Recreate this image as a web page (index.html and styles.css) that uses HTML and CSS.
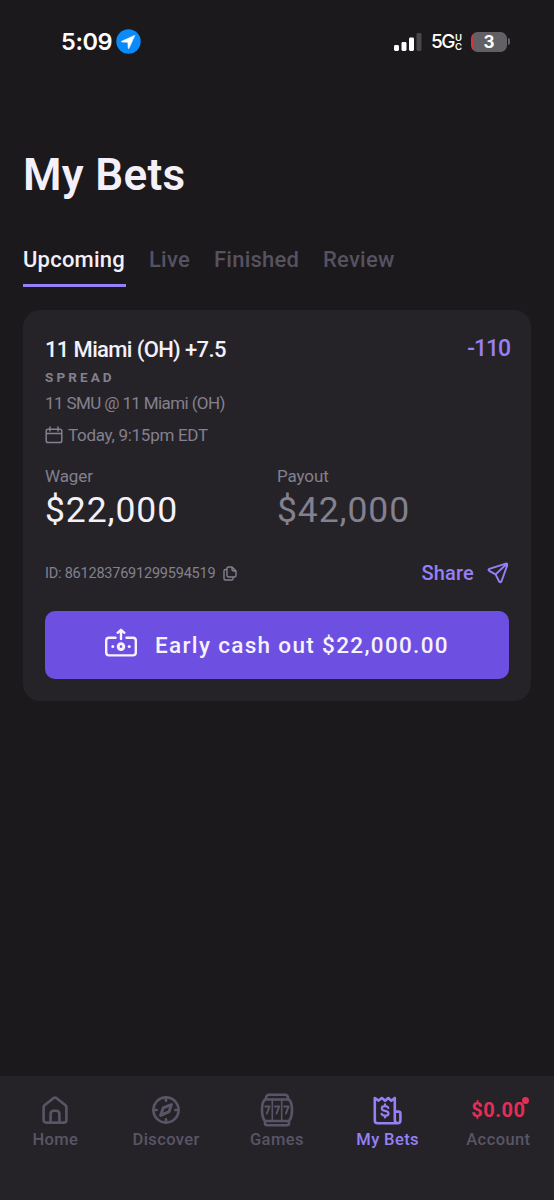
FILE: index.html
```html
<!DOCTYPE html>
<html lang="en">
<head>
<meta charset="utf-8">
<title>My Bets</title>
<link rel="stylesheet" href="styles.css">
</head>
<body>
<div class="app">
  <header class="status">
    <div class="clock"><span class="time">5:09</span>
      <svg class="loc" viewBox="0 0 25 25"><circle cx="12.5" cy="12.5" r="12.2" fill="#0a8bfb"/><path d="M18.6 6.5 5.7 12.2q-.8.6.2.8l6 .3.3 5.9q.3 1 .8.1z" fill="#fff" stroke="#fff" stroke-width=".6" stroke-linejoin="round"/></svg>
    </div>
    <div class="signals">
      <svg class="bars" viewBox="0 0 28 18"><rect x="0" y="12" width="5" height="6" rx="1.4" fill="#fff"/><rect x="7.5" y="9" width="5" height="9" rx="1.4" fill="#fff"/><rect x="15" y="4.500" width="5" height="13.500" rx="1.4" fill="#fff"/><rect x="22.5" y="0" width="5" height="18" rx="1.4" fill="#48474a"/></svg>
      <span class="net">5G</span><span class="uc"><span>U</span><span>C</span></span>
      <div class="battery"><span>3</span></div><i class="nub"></i>
    </div>
  </header>
  <main>
    <h1>My Bets</h1>
    <nav class="tabs"><a class="tab t-up active">Upcoming</a><a class="tab t-live">Live</a><a class="tab t-fin">Finished</a><a class="tab t-rev">Review</a></nav>
    <section class="card">
      <div class="head"><h2>11 Miami (OH) +7.5</h2><span class="odds">-110</span></div>
      <div class="kind">SPREAD</div>
      <div class="match">11 SMU @ 11 Miami (OH)</div>
      <div class="when"><svg viewBox="0 0 18 18" class="cal"><path d="M3 3.2h12q1.8 0 1.8 1.8v9.7q0 1.8-1.8 1.8H3q-1.8 0-1.8-1.8V5Q1.200 3.200 3 3.200zM1.200 7.600h15.600M5 .9v4.200M13 .9v4.200"/></svg><span>Today, 9:15pm EDT</span></div>
      <div class="amounts">
        <div><div class="label">Wager</div><div class="value">$22,000</div></div>
        <div><div class="label">Payout</div><div class="value dim">$42,000</div></div>
      </div>
      <div class="meta">
        <div class="id"><span>ID: 8612837691299594519</span><svg viewBox="0 0 14 15" class="copy"><path d="M9 1H5.400Q4 1 4 2.400v7.200Q4 11 5.400 11h6.200Q13 11 13 9.600V5zM9 1v2.600Q9 5 10.400 5H13M4 3.500H2.400Q1 3.500 1 5v7.500Q1 14 2.500 14h6.200q1.300 0 1.300-1.300V11"/></svg></div>
        <div class="share"><span>Share</span><svg viewBox="0 0 22 22" class="plane"><path d="M18.800 1.600 2.400 6.800Q.7 7.600 2.200 8.800L8.600 12.400 12.300 19.700Q13.600 21 14.500 19.300L20.200 3.400Q20.500 1.300 18.800 1.600zM8.600 12.400 19.600 2"/></svg></div>
      </div>
      <button class="cashout"><svg viewBox="0 0 32 30" class="cash"><path d="M10.500 9.800H4Q1.200 9.800 1.200 12.600v12q0 2.800 2.800 2.800h24q2.800 0 2.800-2.800v-12q0-2.800-2.800-2.800h-6.500M16 11V3M12.600 4.800 16 1.800l3.400 3"/><circle cx="16" cy="18.600" r="2.800" class="coin"/><circle cx="7.800" cy="18.600" r="1.500" class="dot"/><circle cx="24.200" cy="18.600" r="1.500" class="dot"/></svg><span>Early cash out $22,000.00</span></button>
    </section>
  </main>
  <footer class="nav">
    <a class="item"><span class="ico"><svg viewBox="0 0 26 28" width="26" height="28"><path d="M1.600 11.200Q1.600 10 2.500 9.200L11.700 1.900Q13 1 14.300 1.900L23.500 9.200Q24.400 10 24.400 11.200V24Q24.400 26.600 21.800 26.600H4.200Q1.600 26.600 1.600 24zM8.600 26.600V18q0-3.200 3.200-3.200h2.400q3.200 0 3.200 3.200v8.600"/></svg></span><span class="lab">Home</span></a>
    <a class="item"><span class="ico"><svg viewBox="0 0 28 28" width="28" height="28"><circle cx="14" cy="14" r="12.600"/><path d="M14 1.500v3.200M14 23.300v3.200M1.500 14h3.200M23.300 14h3.200"/><path class="needle" d="M19.400 8.600l-2.300 7-8.500 3.800 2.700-7.600z"/></svg></span><span class="lab">Discover</span></a>
    <a class="item"><span class="ico"><svg viewBox="0 0 34 34" width="34" height="34"><path d="M6 5.500Q6 1.800 9 1.800h16q3 0 3 3.700M5 6.500h24q3 3 3 10.500t-3 11H5Q2 25 2 17T5 6.500zM5 28.500v1.700q0 2 2 2h20q2 0 2-2v-1.700"/><path class="thin" d="M12.300 6v22M21.700 6v22"/><path class="seven" d="M5.200 13.500h4.300l-2.700 7M14.900 13.500h4.300l-2.700 7M24.300 13.500h4.300l-2.700 7"/></svg></span><span class="lab">Games</span></a>
    <a class="item on"><span class="ico"><svg viewBox="0 0 29 29" width="29" height="29"><path d="M1.800 2l3.800 2.600L8.900 2l3.200 2.800L15.300 2l3 2.700L21.800 2v21.500q0 3.700 2.800 3.700H4.600q-2.800 0-2.800-2.800zM21.800 15.600h3.600q2 0 2 2v7q0 2.600-2.800 2.600"/><path class="buck" d="M15.300 12q-.6-1.800-3.500-1.800-3 0-3 2.200 0 1.900 3.200 2.400 3.500.5 3.500 2.600 0 2.300-3.400 2.300-3 0-3.500-1.900M12 8.400v1.800M12 19.700v1.800"/></svg></span><span class="lab">My Bets</span></a>
    <a class="item"><span class="ico"><b class="balance">$0.00<i class="badge"></i></b></span><span class="lab">Account</span></a>
  </footer>
</div>
</body>
</html>
```
FILE: styles.css
```css
* { box-sizing: border-box; margin: 0; padding: 0; }
body { background: #1b191c; color: #f3f0fa; font-family: Roboto, sans-serif; }
svg { display: block; flex: none; fill: none; stroke: currentColor; stroke-linecap: round; stroke-linejoin: round; }
.app { width: 554px; height: 1200px; display: flex; flex-direction: column; overflow: hidden; }
span, h1, h2, .kind, .match, .label, .value, .tab { white-space: nowrap; }

.status { height: 145px; padding: 29px 44px 0 61px; display: flex; justify-content: space-between; align-items: flex-start; font-family: Inter, sans-serif; color: #fff; }
.clock, .signals { display: flex; align-items: center; height: 25px; }
.time { font-size: 23.500px; font-weight: 600; width: 55px; letter-spacing: -0.400px; }
.loc { width: 25px; height: 25px; stroke: none; }
.bars { width: 28px; height: 18px; stroke: none; }
.net { font-size: 19px; font-weight: 500; margin-left: 9px; width: 24px; letter-spacing: -1.600px; }
.uc { display: flex; flex-direction: column; font-size: 9.500px; font-weight: 600; line-height: 9px; width: 7px; }
.battery { width: 36px; height: 20px; margin-left: 9px; border-radius: 6.500px; background: linear-gradient(90deg, #d3353d 2px, #626064 2px); text-align: center; font-size: 17px; font-weight: 700; line-height: 20px; }
.nub { width: 2px; height: 7px; margin-left: 1px; border-radius: 0 2px 2px 0; background: #626064; }

main { flex: 1; padding: 0 23px; }
h1 { font-size: 44px; font-weight: 600; line-height: 60px; letter-spacing: .300px; }
.tabs { display: flex; gap: 23px; margin-top: 39px; height: 43px; font-size: 22px; font-weight: 500; line-height: 32px; letter-spacing: .220px; color: #565260; }
.tab { height: 43px; }
.active { color: #f3f0fa; border-bottom: 3px solid #9780f7; }
.t-up { width: 103px; }
.t-live { width: 42px; }
.t-fin { width: 86px; }

.card { margin-top: 23px; height: 391px; padding: 24px 22px 22px; border-radius: 17px; background: #252328; color: #83808f; display: flex; flex-direction: column; }
.head { display: flex; justify-content: space-between; height: 30px; line-height: 31px; }
h2 { font-size: 22px; font-weight: 500; letter-spacing: -.640px; color: #f3f0fa; line-height: 32px; }
.odds { font-size: 23px; font-weight: 500; letter-spacing: -1.100px; margin-right: -1px; color: #9780f7; line-height: 29px; }
.kind { font-size: 13.500px; font-weight: 700; letter-spacing: 3.100px; line-height: 18px; margin-top: 4px; }
.match { font-size: 17px; line-height: 22px; letter-spacing: -.620px; margin-top: 6px; }
.when { display: flex; align-items: center; gap: 5px; font-size: 17px; letter-spacing: -.280px; height: 22px; margin-top: 10px; }
.cal { width: 18px; height: 18px; stroke-width: 1.500; }
.amounts { display: grid; grid-template-columns: 1fr 1fr; margin-top: 19px; height: 70px; }
.label { font-size: 17px; line-height: 22px; letter-spacing: -.100px; }
.value { font-size: 35.500px; line-height: 46px; letter-spacing: .900px; color: #f3f0fa; }
.dim { color: #83808f; }
.meta { display: flex; justify-content: space-between; align-items: center; height: 30px; margin-top: 23px; }
.id, .share { display: flex; align-items: center; }
.id { font-size: 14.500px; letter-spacing: -.220px; gap: 8px; }
.copy { width: 14px; height: 15px; stroke-width: 1.400; }
.share { color: #9780f7; font-size: 20px; font-weight: 500; letter-spacing: .200px; gap: 13px; }
.plane { width: 22px; height: 22px; stroke-width: 1.900; }
.cashout { display: flex; align-items: center; justify-content: center; gap: 18px; height: 68px; margin-top: 23px; border: 0; border-radius: 10px; background: #6d4fe2; color: #f6f2ff; font: 500 22.500px/30px Roboto, sans-serif; letter-spacing: 1.330px; }
.cash { width: 32px; height: 30px; margin-bottom: 4px; stroke-width: 2.400; }
.dot { fill: currentColor; stroke: none; }
.coin { stroke-width: 3; }

.nav { height: 124px; padding: 15px 0 0; background: #252328; display: grid; grid-template-columns: repeat(5, 110.750px); color: #5a5566; }
.item { display: flex; flex-direction: column; align-items: center; }
.ico { height: 38px; display: flex; align-items: center; stroke-width: 2.600; }
.lab { font-size: 16.500px; font-weight: 500; line-height: 22px; letter-spacing: .400px; }
.thin { stroke-width: 1.600; }
.seven { stroke-width: 2; }
.needle { stroke-width: 3; }
.buck { stroke-width: 2.200; }
.on { color: #9780f7; }
.balance { position: relative; color: #e32f57; font-size: 20px; font-weight: 700; letter-spacing: .500px; }
.badge { position: absolute; right: -4px; top: -1px; width: 7px; height: 7px; border-radius: 50%; background: #e32f57; }
```
